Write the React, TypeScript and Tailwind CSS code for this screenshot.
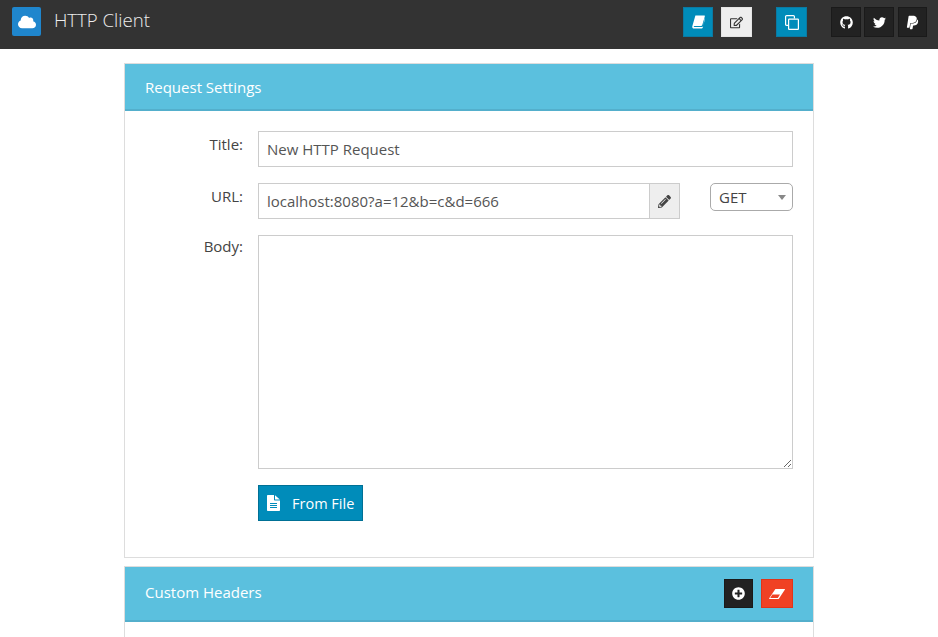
import { FaCloud, FaGithub, FaPaypal, FaPencilAlt, FaPlusCircle, FaRegEdit, FaTwitter } from "react-icons/fa";
import type { ReactNode } from "react";

function BookIcon() {
  return (
    <svg width="13" height="14" viewBox="0 0 13 14" fill="currentColor">
      <path d="M3.4 0.4H12.2C12.8 0.4 13 0.9 12.8 1.5L10.2 10.2C10 10.8 9.6 11 9 11H2.4C1.7 11 1.4 11.8 2.2 12H10C10.6 12 11 11.7 11.2 11.1L12.6 3.4L13 3.8L10.8 12.6C10.6 13.3 10.2 13.6 9.6 13.6H2C0.8 13.6 0 12.6 0.3 11.2Z" />
    </svg>
  );
}

function CopyIcon() {
  return (
    <svg width="14" height="15" viewBox="0 0 14 15" fill="none" stroke="currentColor" strokeWidth="1.2">
      <path d="M3 10.4H1.6C1 10.4 0.6 10 0.6 9.4V1.6C0.6 1 1 0.6 1.6 0.6H8.4C9 0.6 9.4 1 9.4 1.6V3.6" />
      <rect x="3.6" y="4.1" width="9.8" height="10.3" rx="0.6" />
    </svg>
  );
}

function FileIcon() {
  return (
    <svg width="13" height="16" viewBox="0 0 13 16" fill="currentColor">
      <path d="M0 1C0 0.4 0.4 0 1 0H7V4.6C7 5.2 7.4 5.6 8 5.6H13V15C13 15.6 12.6 16 12 16H1C0.4 16 0 15.6 0 15ZM3 8V9H10V8ZM3 10V11H10V10ZM3 12V13H10V12Z" fillRule="evenodd" />
      <path d="M8 0.2L12.8 4.6H8Z" />
    </svg>
  );
}

function EraserIcon() {
  return (
    <svg width="16" height="10" viewBox="0 0 16 10" fill="currentColor">
      <path d="M6.4 0H15.4C16 0 16.1 0.4 15.8 0.8L10 9.4C9.8 9.8 9.4 10 9 10H0.6C0 10 -0.1 9.6 0.2 9.2ZM3.4 5.6L1.2 9H8.8L11 5.6Z" fillRule="evenodd" />
    </svg>
  );
}

function NavButton({ className, children }: { className: string; children: ReactNode }) {
  return (
    <button className={`flex h-[30px] items-center justify-center border text-[13px] ${className}`}>
      {children}
    </button>
  );
}

function PanelHeader({ title, titleClass, children }: { title: string; titleClass: string; children?: ReactNode }) {
  return (
    <div className="flex items-center justify-between border-b-2 border-[#53afcc] bg-[#5bc0de] pl-5 pr-5 text-white">
      <h2 className={`text-[15px] font-medium ${titleClass}`}>{title}</h2>
      {children}
    </div>
  );
}

function FormRow({ label, labelClass = "pt-[3px]", children }: { label: string; labelClass?: string; children: ReactNode }) {
  return (
    <div className="flex gap-[15px]">
      <label className={`w-[118px] text-right text-[15px] leading-5 text-[#444] ${labelClass}`}>{label}</label>
      <div className="flex-1">{children}</div>
    </div>
  );
}

export default function App() {
  return (
    <div className="h-[637px] overflow-hidden bg-white font-['Open_Sans',sans-serif]">
      <header className="flex h-[49px] items-start bg-[#333] pl-3 pr-[11px] pt-[7px]">
        <div className="flex h-[29px] w-[29px] items-center justify-center rounded-[2px] bg-[#1f86cd] text-white">
          <FaCloud size={18} />
        </div>
        <span className="ml-[13px] text-[18.6px] font-light leading-[26px] text-[#eee]">HTTP Client</span>
        <div className="ml-auto flex">
          <NavButton className="w-[30px] border-[#0a7aa3] bg-[#008cba] text-white">
            <BookIcon />
          </NavButton>
          <NavButton className="ml-2 w-[31px] border-[#e4e4e4] bg-[#eee] text-[#333]">
            <FaRegEdit />
          </NavButton>
          <NavButton className="ml-6 w-[31px] border-[#0a7aa3] bg-[#008cba] text-white">
            <CopyIcon />
          </NavButton>
          <NavButton className="ml-6 w-[30px] border-[#1a1a1a] bg-[#222] text-white">
            <FaGithub />
          </NavButton>
          <NavButton className="ml-[3px] w-[30px] border-[#1a1a1a] bg-[#222] text-white">
            <FaTwitter />
          </NavButton>
          <NavButton className="ml-1 w-[29px] border-[#1a1a1a] bg-[#222] text-[15px] text-white">
            <FaPaypal />
          </NavButton>
        </div>
      </header>

      <main className="mx-auto mt-[14px] w-[690px]">
        <section className="h-[495px] border border-[#ddd]">
          <PanelHeader title="Request Settings" titleClass="pt-[2px]">
            <div className="h-[45px]" />
          </PanelHeader>
          <div className="flex flex-col gap-4 pr-5 pt-5">
            <FormRow label="Title:">
              <input
                readOnly
                value="New HTTP Request"
                className="h-9 w-full border border-[#ccc] px-2 text-[15px] text-[#555] outline-none"
              />
            </FormRow>
            <FormRow label="URL:">
              <div className="flex items-start">
                <input
                  readOnly
                  value="localhost:8080?a=12&b=c&d=666"
                  className="h-9 w-[391px] border-y border-l border-[#ccc] px-2 text-[15px] text-[#555] outline-none"
                />
                <span className="flex h-9 w-[31px] items-center justify-center border border-[#ccc] bg-[#eee] text-[13px] text-[#444]">
                  <FaPencilAlt />
                </span>
                <div className="ml-[30px] flex h-7 w-[83px] items-center justify-between rounded-[5px] border border-[#aaa] pl-2 pr-[6px] text-[15px] text-[#444]">
                  <span>GET</span>
                  <span className="h-0 w-0 border-x-4 border-t-[5px] border-x-transparent border-t-[#888]" />
                </div>
              </div>
            </FormRow>
            <FormRow label="Body:" labelClass="pt-px">
              <textarea readOnly className="block h-[234px] w-full border border-[#ccc] outline-none" />
              <button className="mt-4 flex h-9 w-[105px] items-center border border-[#007095] bg-[#008cba] pl-2 text-[14.5px] text-white">
                <FileIcon />
                <span className="ml-[12px] pt-px">From File</span>
              </button>
            </FormRow>
          </div>
        </section>

        <section className="mt-2 border border-[#ddd]">
          <PanelHeader title="Custom Headers" titleClass="pb-[2px]">
            <div className="flex h-[53px] items-center gap-2">
              <button className="flex h-[29px] w-[29px] items-center justify-center border border-[#1a1a1a] bg-[#222] text-[13px] text-white">
                <FaPlusCircle />
              </button>
              <button className="flex h-[29px] w-[32px] items-center justify-center border border-[#e0341a] bg-[#f04124] text-white">
                <EraserIcon />
              </button>
            </div>
          </PanelHeader>
          <div className="h-20" />
        </section>
      </main>
    </div>
  );
}
